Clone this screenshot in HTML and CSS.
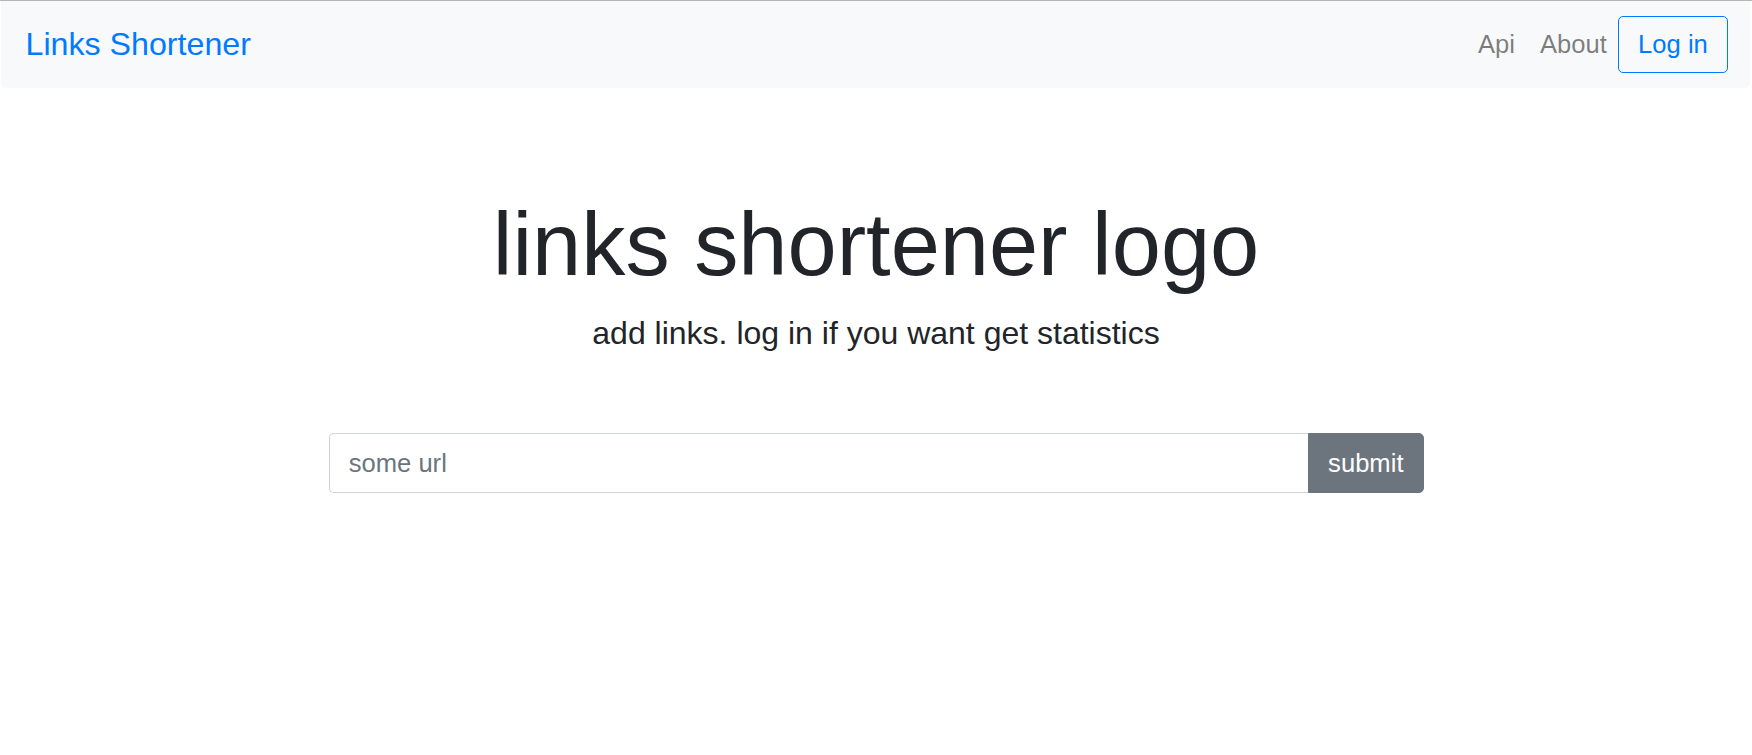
FILE: index.html
```html
<!DOCTYPE html>
<html lang="en">
<head>
<meta charset="utf-8">
<title>Links Shortener</title>
<link rel="stylesheet" href="styles.css">
</head>
<body>
<nav class="navbar">
  <a class="brand" href="#">Links Shortener</a>
  <div class="nav-right">
    <a class="nav-link nav-api" href="#">Api</a>
    <a class="nav-link" href="#">About</a>
    <a class="btn-login" href="#">Log in</a>
  </div>
</nav>
<main class="hero">
  <h1 class="title">links shortener logo</h1>
  <p class="lead">add links. log in if you want get statistics</p>
  <form class="input-group" onsubmit="return false">
    <input class="url-input" type="text" placeholder="some url">
    <button class="btn-submit" type="submit">submit</button>
  </form>
</main>
</body>
</html>
```
FILE: styles.css
```css
html, body {
  margin: 0;
  padding: 0;
  background: #fff;
}
body {
  border-top: 1px solid #b5b5b5;
  font-family: "Liberation Sans", Arial, sans-serif;
  font-size: 25.6px;
  color: #212529;
}
a { text-decoration: none; }

.navbar {
  display: flex;
  align-items: center;
  justify-content: space-between;
  height: 87px;
  box-sizing: border-box;
  margin: 0 2px 0 1px;
  padding: 0 22px 0 24.5px;
  background: #f8f9fa;
  border-radius: 0 0 6px 6px;
}
.brand {
  color: #007bff;
  font-size: 32.2px;
  line-height: 1.5;
}
.nav-right {
  display: flex;
  align-items: center;
}
.nav-link {
  color: rgba(0, 0, 0, 0.5);
  font-size: 25.6px;
  line-height: 1.5;
  padding: 0 11px;
}
.nav-api {
  margin-right: 3px;
}
.btn-login {
  display: inline-block;
  color: #007bff;
  border: 1px solid #007bff;
  border-radius: 5px;
  padding: 8.8px 19.2px;
  font-size: 25.6px;
  line-height: 1.5;
}

.hero {
  padding-top: 103px;
  text-align: center;
}
.title {
  margin: 0 0 10px;
  font-size: 88.4px;
  font-weight: 300;
  line-height: 108px;
  color: #212529;
}
.lead {
  margin: 0;
  font-size: 32px;
  line-height: 1.5;
  font-weight: 300;
  color: #212529;
}
.input-group {
  display: flex;
  width: 1095px;
  margin: 76px auto 0;
}
.url-input {
  flex: 1;
  min-width: 0;
  height: 60px;
  box-sizing: border-box;
  border: 1px solid #ced4da;
  border-right: none;
  border-radius: 5px 0 0 5px;
  padding: 0 19.2px;
  font-family: "Liberation Sans", Arial, sans-serif;
  font-size: 25.6px;
  color: #495057;
  outline: none;
}
.url-input::placeholder {
  color: #6c757d;
  opacity: 1;
}
.btn-submit {
  height: 60px;
  box-sizing: border-box;
  border: 1px solid #6c757d;
  background: #6c757d;
  color: #fff;
  border-radius: 0 5px 5px 0;
  padding: 0 19px;
  font-family: "Liberation Sans", Arial, sans-serif;
  font-size: 25.6px;
  cursor: pointer;
}
```
